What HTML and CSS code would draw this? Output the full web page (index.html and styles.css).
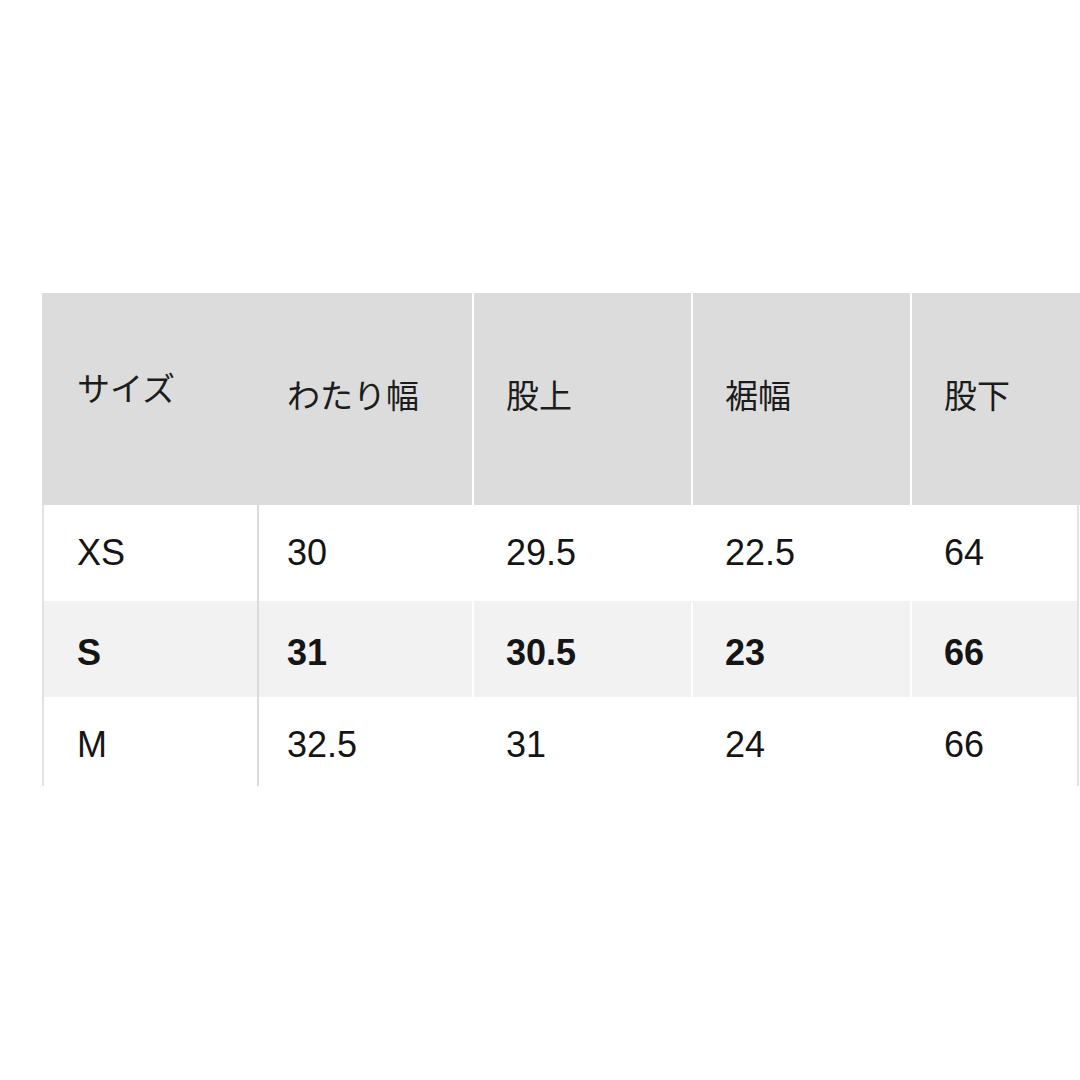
FILE: index.html
```html
<!DOCTYPE html>
<html lang="ja">
<head>
<meta charset="utf-8">
<title>サイズ表</title>
<link rel="stylesheet" href="styles.css">
</head>
<body>
<div class="page">
  <div class="table">
    <div class="hcell hspan"><span class="h1">サイズ</span><span class="h2">わたり幅</span></div>
    <div class="hcell">股上</div>
    <div class="hcell">裾幅</div>
    <div class="hcell last">股下</div>

    <div class="cell first">XS</div>
    <div class="cell second">30</div>
    <div class="cell">29.5</div>
    <div class="cell">22.5</div>
    <div class="cell last">64</div>

    <div class="cell first alt">S</div>
    <div class="cell second alt">31</div>
    <div class="cell alt">30.5</div>
    <div class="cell alt">23</div>
    <div class="cell alt last">66</div>

    <div class="cell first">M</div>
    <div class="cell second">32.5</div>
    <div class="cell">31</div>
    <div class="cell">24</div>
    <div class="cell last">66</div>
  </div>
</div>
</body>
</html>
```

FILE: styles.css
```css
html, body {
  margin: 0;
  padding: 0;
  background: #ffffff;
  overflow: hidden;
}

.page {
  width: 1080px;
  height: 1080px;
  padding: 293px 0 0 42px;
  box-sizing: border-box;
  overflow: hidden;
}

.table {
  display: grid;
  grid-template-columns: 217px 215px 219px 219px 168px;
  grid-template-rows: 212px 96px 96px 96px;
  height: 493px;
  overflow: hidden;
  color: #111111;
}

.hcell {
  background: #dcdcdc;
  border-right: 2px solid #ffffff;
  display: flex;
  align-items: center;
  padding: 0 0 10px 32px;
  font-family: "Noto Sans CJK JP", "Noto Sans", sans-serif;
  font-size: 33px;
  color: #1c1c1c;
}

.hspan {
  grid-column: span 2;
  padding-left: 35px;
}

.h1 {
  width: 210px;
  margin-bottom: 14px;
}

.hcell.last {
  border-right: 0;
}

.cell {
  display: flex;
  align-items: center;
  padding: 0 0 0 32px;
  border-right: 2px solid #ffffff;
  font-family: "Liberation Sans", Arial, sans-serif;
  font-size: 36px;
  color: #151515;
}

.cell.first {
  border-left: 2px solid #e2e2e2;
  border-right: 2px solid #dadada;
  padding-left: 33px;
}

.cell.second {
  padding-left: 28px;
}

.cell.last {
  border-right: 2px solid #e2e2e2;
  margin-right: 1px;
}

.cell.alt {
  background: #f2f2f2;
  font-weight: bold;
  padding-top: 8px;
}

.cell.alt.first {
  border-right-color: #dadada;
}

.cell.alt.last {
  border-right-color: #e2e2e2;
}
```
